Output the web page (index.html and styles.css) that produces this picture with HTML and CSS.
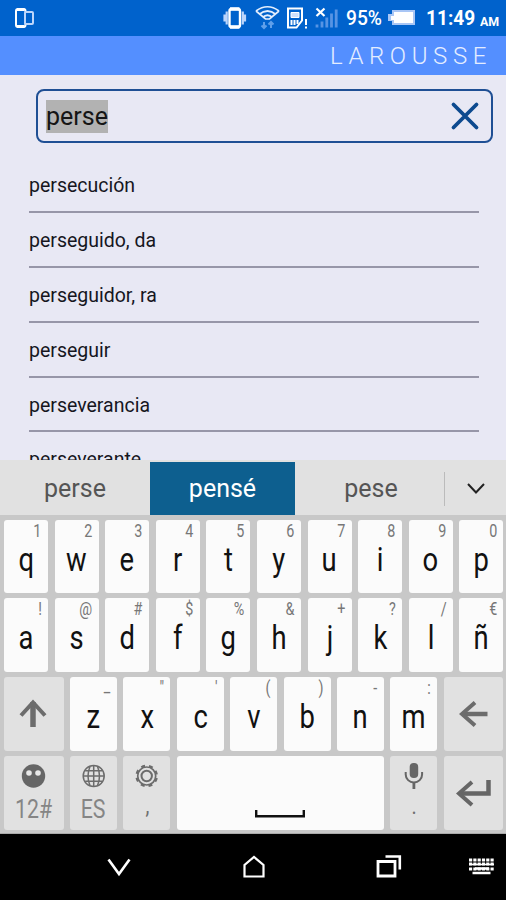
FILE: index.html
```html
<!DOCTYPE html>
<html lang="es">
<head>
  <meta charset="UTF-8">
  <meta name="viewport" content="width=device-width, initial-scale=1.0">
  <title>Larousse</title>
  <link rel="stylesheet" href="styles.css">
</head>
<body>
  <div class="status-bar">
    <svg class="device" width="22" height="24" viewBox="0 0 22 24" fill="none" stroke="#fff">
      <rect x="2" y="3" width="9.500" height="18" rx="2" stroke-width="2"/>
      <path d="M3 3.500h7.500M3 20.500h7.500" stroke-width="3"/>
      <rect x="11" y="6" width="8" height="12" rx="1" fill="#0062cc" stroke="#bcd5fb" stroke-width="2"/>
    </svg>
    <svg width="32" height="36" viewBox="0 0 32 36" fill="none" stroke="#fff">
      <rect x="10.500" y="9" width="10.500" height="18" rx="2" stroke-width="2.400"/>
      <path d="M11 9h9.500M11 27h9.500" stroke-width="3.400"/>
      <path d="M7.700 11.500v13M23.800 11.500v13M5.500 14.500v7M26 14.500v7" stroke="#bcd5fb" stroke-width="2.200"/>
    </svg>
    <svg width="33" height="36" viewBox="0 0 33 36" fill="none" stroke="#e3eefe" stroke-width="1.700">
      <path d="M5 11q11.500-8.500 23 0M8 14.500q8.500-7 17 0M11.500 17.500q5-4.500 10 0M5 11l9.500 8h4L28 11"/>
      <path d="M13 22v6M10.500 25.500l2.500 2.500 2.500-2.500M20 28v-6M17.500 24.500l2.500-2.500 2.500 2.500" stroke="#5f9fea" stroke-width="2"/>
    </svg>
    <svg width="28" height="36" viewBox="0 0 28 36" fill="none" stroke="#fff">
      <path d="M4 8.500h14v12l-5.500 7H4z" stroke-width="2"/>
      <path d="M7 12.500h8v5H7z" fill="#cfe1fc" stroke-width="1"/>
      <path d="M7.500 20v5M10.500 20v5M13.500 20v4M22 19v6M22 26.500v2" stroke-width="2"/>
    </svg>
    <svg width="30" height="36" viewBox="0 0 30 36" fill="none" stroke="#5794e4" stroke-width="2.800">
      <path d="M5 27.500v-3M10 27.500v-6M14.800 27.500v-10M19.500 27.500v-14M24.200 27.500v-18"/>
      <path d="M4.500 8.500l8 7.500M12.500 8.500l-8 7.500" stroke="#fff" stroke-width="2.200"/>
    </svg>
    <span class="percent"><span>95%</span></span>
    <svg width="32" height="36" viewBox="0 0 32 36">
      <path d="M6 10h23v15H6v-4H2v-7h4z" fill="#a9c6f5"/>
      <path d="M8 12h19v11H8v-3H5v-4h3z" fill="#fff"/>
    </svg>
    <span class="clock"><span>11:49</span></span><span class="ampm"><span>AM</span></span>
  </div>

  <header class="brand">LAROUSSE</header>

  <main class="content">
    <div class="search">
      <span class="query">perse</span>
      <svg width="30" height="30" viewBox="0 0 30 30" fill="none" stroke="#0d4a8f" stroke-width="3.800" stroke-linecap="round">
        <path d="M3.500 3.500l23 23M26.500 3.500l-23 23"/>
      </svg>
    </div>
    <ul class="results">
      <li>persecución</li>
      <li>perseguido, da</li>
      <li>perseguidor, ra</li>
      <li>perseguir</li>
      <li>perseverancia</li>
      <li>perseverante</li>
    </ul>
  </main>

  <div class="suggestions">
    <span>perse</span>
    <span class="active">pensé</span>
    <span class="last">pese</span>
    <span class="more">
      <svg width="20" height="14" viewBox="0 0 20 14" fill="none" stroke="#222" stroke-width="2"><path d="M2 2l8 8.500L18 2"/></svg>
    </span>
  </div>

  <div class="keyboard">
    <div class="keys letters">
      <div class="key"><i>1</i><b>q</b></div>
      <div class="key"><i>2</i><b>w</b></div>
      <div class="key"><i>3</i><b>e</b></div>
      <div class="key"><i>4</i><b>r</b></div>
      <div class="key"><i>5</i><b>t</b></div>
      <div class="key"><i>6</i><b>y</b></div>
      <div class="key"><i>7</i><b>u</b></div>
      <div class="key"><i>8</i><b>i</b></div>
      <div class="key"><i>9</i><b>o</b></div>
      <div class="key"><i>0</i><b>p</b></div>
      <div class="key"><i>!</i><b>a</b></div>
      <div class="key"><i>@</i><b>s</b></div>
      <div class="key"><i>#</i><b>d</b></div>
      <div class="key"><i>$</i><b>f</b></div>
      <div class="key"><i>%</i><b>g</b></div>
      <div class="key"><i>&amp;</i><b>h</b></div>
      <div class="key"><i>+</i><b>j</b></div>
      <div class="key"><i>?</i><b>k</b></div>
      <div class="key"><i>/</i><b>l</b></div>
      <div class="key"><i>€</i><b>ñ</b></div>
    </div>
    <div class="keys bottom">
      <div class="key dark">
        <svg width="30" height="30" viewBox="0 0 30 30" fill="none" stroke="#6c6c6c"><path d="M14 28V3" stroke-width="5.500"/><path d="M2 16.500L14 3.500l12 13" stroke-width="4"/></svg>
      </div>
      <div class="key"><i class="under">_</i><b>z</b></div>
      <div class="key"><i>"</i><b>x</b></div>
      <div class="key"><i>'</i><b>c</b></div>
      <div class="key"><i>(</i><b>v</b></div>
      <div class="key"><i>)</i><b>b</b></div>
      <div class="key"><i>-</i><b>n</b></div>
      <div class="key"><i>:</i><b>m</b></div>
      <div class="key dark">
        <svg width="30" height="30" viewBox="0 0 30 30" fill="none" stroke="#6c6c6c"><path d="M3 15h25.500" stroke-width="4.500"/><path d="M16 3.500L3 15l13 11.500" stroke-width="4"/></svg>
      </div>
      <div class="key dark func">
        <svg width="26" height="26" viewBox="0 0 26 26"><circle cx="12.500" cy="13" r="11.700" fill="#666"/><circle cx="8" cy="10" r="2.800" fill="#e8e8e8"/><circle cx="17" cy="10" r="2.800" fill="#e8e8e8"/></svg>
        <em>12#</em>
      </div>
      <div class="key dark func">
        <svg width="26" height="26" viewBox="0 0 26 26" fill="none" stroke="#6c6c6c" stroke-width="1.500"><circle cx="12.700" cy="13" r="10.500"/><path d="M12.700 2.500v21M2.200 13h21M4.200 7.800h17M4.200 18.200h17M9 3.500q-4 9.500 0 19M16.500 3.500q4 9.500 0 19"/></svg>
        <em>ES</em>
      </div>
      <div class="key dark func">
        <svg width="26" height="26" viewBox="0 0 26 26" fill="none" stroke="#6c6c6c"><circle cx="12.700" cy="13" r="9" stroke-width="1.700"/><circle cx="12.700" cy="13" r="10" stroke-width="2.600" stroke-dasharray="3.900 3.954" stroke-dashoffset="-2"/><circle cx="12.700" cy="13" r="5.200" stroke-width="2"/></svg>
        <em class="mark">,</em>
      </div>
      <div class="key space">
        <svg width="50" height="8" viewBox="0 0 50 8" fill="none" stroke="#111" stroke-width="2.400"><path d="M1.200 0v6.300h47.600V0"/></svg>
      </div>
      <div class="key dark func">
        <svg width="26" height="26" viewBox="0 0 26 26" fill="none" stroke="#666" stroke-width="2"><rect x="8.700" y="0" width="8.500" height="15" rx="4" fill="#666" stroke="none"/><path d="M4.700 9v2.500a8.200 8 0 0 0 16.400 0V9"/><path d="M12.900 19v7" stroke-width="2.800"/></svg>
        <em class="mark">.</em>
      </div>
      <div class="key dark">
        <svg width="38" height="28" viewBox="0 0 38 28" fill="none" stroke="#666" stroke-width="4"><path d="M4 14.500h29.500V1" stroke-width="4.500"/><path d="M17 3L4 14.500 17 26"/></svg>
      </div>
    </div>
  </div>

  <nav class="nav-bar">
    <svg width="26" height="24" viewBox="0 0 26 24"><path d="M2.500 4.500L13 19 23.500 4.500" stroke-width="2.600"/></svg>
    <svg width="26" height="24" viewBox="0 0 26 24"><path d="M3.500 21.500V10L13 2l9.500 8v11.500z" stroke-width="2.200"/></svg>
    <svg width="26" height="24" viewBox="0 0 26 24"><path d="M2 6.500h17v14.500H2z" stroke-width="2.800"/><path d="M9.500 1.500h14.300v13" stroke-width="2.600"/></svg>
    <svg width="26" height="24" viewBox="0 0 26 24"><path d="M0 5h25M0 9h25M0 14h25" stroke-width="3" stroke-dasharray="3.200 1.100"/><path d="M0 9.500h25" stroke-width="1.500"/><path d="M6 13.500h14M3.500 18h18" stroke-width="2.600"/></svg>
  </nav>
</body>
</html>
```

FILE: styles.css
```css
* { margin: 0; padding: 0; box-sizing: border-box; }
body {
  width: 506px;
  height: 900px;
  display: flex;
  flex-direction: column;
  overflow: hidden;
  background: #e8e8f4;
  font-family: Roboto, "Liberation Sans", sans-serif;
}
svg { display: block; flex: none; }

/* Top bars */
.status-bar {
  height: 36px;
  flex: none;
  display: flex;
  align-items: center;
  background: #0062cc;
  color: white;
  font-weight: 500;
}
.status-bar span span { display: inline-block; transform-origin: left; }
.device { margin: 0 auto 0 14px; }
.percent { width: 44px; font-size: 20px; line-height: 38px; padding-left: 4px; }
.percent span { transform: scaleX(0.96); }
.clock { width: 53px; padding-left: 8px; font-size: 20.5px; font-weight: 700; line-height: 38px; white-space: nowrap; }
.clock span { transform: scaleX(0.93); }
.ampm { width: 35px; padding: 5px 0 0 9px; font-size: 13.5px; font-weight: 700; }
.ampm span { transform: scaleX(0.92); }
.brand {
  height: 39px;
  flex: none;
  padding-right: 14px;
  background: #548fff;
  color: #e4edff;
  font-size: 24px;
  font-weight: 300;
  line-height: 40px;
  letter-spacing: 5.6px;
  text-align: right;
}

/* Search and word list */
.content { height: 385px; flex: none; overflow: hidden; padding: 13.500px 13px 0 29px; }
.search {
  height: 54px;
  margin-left: 7px;
  padding: 0 11px 0 8px;
  display: flex;
  align-items: center;
  justify-content: space-between;
  border: 2.5px solid #1f4f94;
  border-radius: 8px;
}
.query { margin-top: 1px; background: #b2b2b2; color: #151515; font-size: 25px; line-height: 33px; }
.results { list-style: none; margin: 15.500px 14px 0 0; }
.results li {
  height: 54.9px;
  padding-top: 15px;
  border-bottom: 2px solid #9796a8;
  color: #16161e;
  font-size: 19.5px;
  line-height: 26px;
}

/* Suggestions */
.suggestions {
  height: 55px;
  flex: none;
  display: grid;
  grid-template-columns: 150px 145px 149px 62px;
  align-items: center;
  padding-top: 2px;
  background: #e1e1e1;
  color: #555;
  font-size: 25px;
  line-height: 53px;
  text-align: center;
}
.suggestions .active { background: #0d5f8f; color: white; }
.suggestions .last { padding-left: 3px; }
.more { height: 34px; border-left: 1px solid #bbb; display: flex; align-items: center; justify-content: center; }

/* Keyboard */
.keyboard {
  height: 319px;
  flex: none;
  padding: 4.5px 2.6px 0 4px;
  background: #c8c8c8;
  border-bottom: 1px solid #aaa;
}
.keys { display: grid; grid-auto-rows: 73.5px; gap: 5.4px 6.5px; }
.letters { grid-template-columns: repeat(10, 1fr); margin-bottom: 5.4px; }
.bottom { grid-template-columns: 59.6px repeat(7, 1fr) 59.6px; }
.key {
  min-width: 0;
  display: flex;
  flex-direction: column;
  align-items: center;
  background: #fbfbfb;
  border-radius: 3px;
  color: #111;
}
.key i {
  align-self: flex-end;
  height: 20px;
  padding: 1px 8px 0 0;
  color: #777;
  font-size: 17.5px;
  font-style: normal;
  line-height: 20px;
  transform: scaleX(0.82);
  transform-origin: right;
}
.key .under { line-height: 16px; }
.key b { font-size: 33px; font-weight: 400; line-height: 40px; transform: scaleX(0.83); }
.dark { background: #e1e1e1; justify-content: center; }
.func { justify-content: flex-start; padding-top: 7px; }
.func em { color: #858585; font-size: 26px; font-style: normal; line-height: 40px; transform: scaleX(0.82); }
.func .mark { color: #707070; font-size: 24px; line-height: 34px; }
.space { grid-column: span 4; justify-content: flex-end; padding-bottom: 12px; }

/* Navigation */
.nav-bar {
  flex: 1;
  display: grid;
  grid-template-columns: 26px 26px 26px 26px;
  column-gap: 109px;
  align-items: center;
  padding-left: 106px;
  background: black;
}
.nav-bar svg { fill: none; stroke: white; }
.nav-bar svg:last-child { margin-left: -42px; }
```
